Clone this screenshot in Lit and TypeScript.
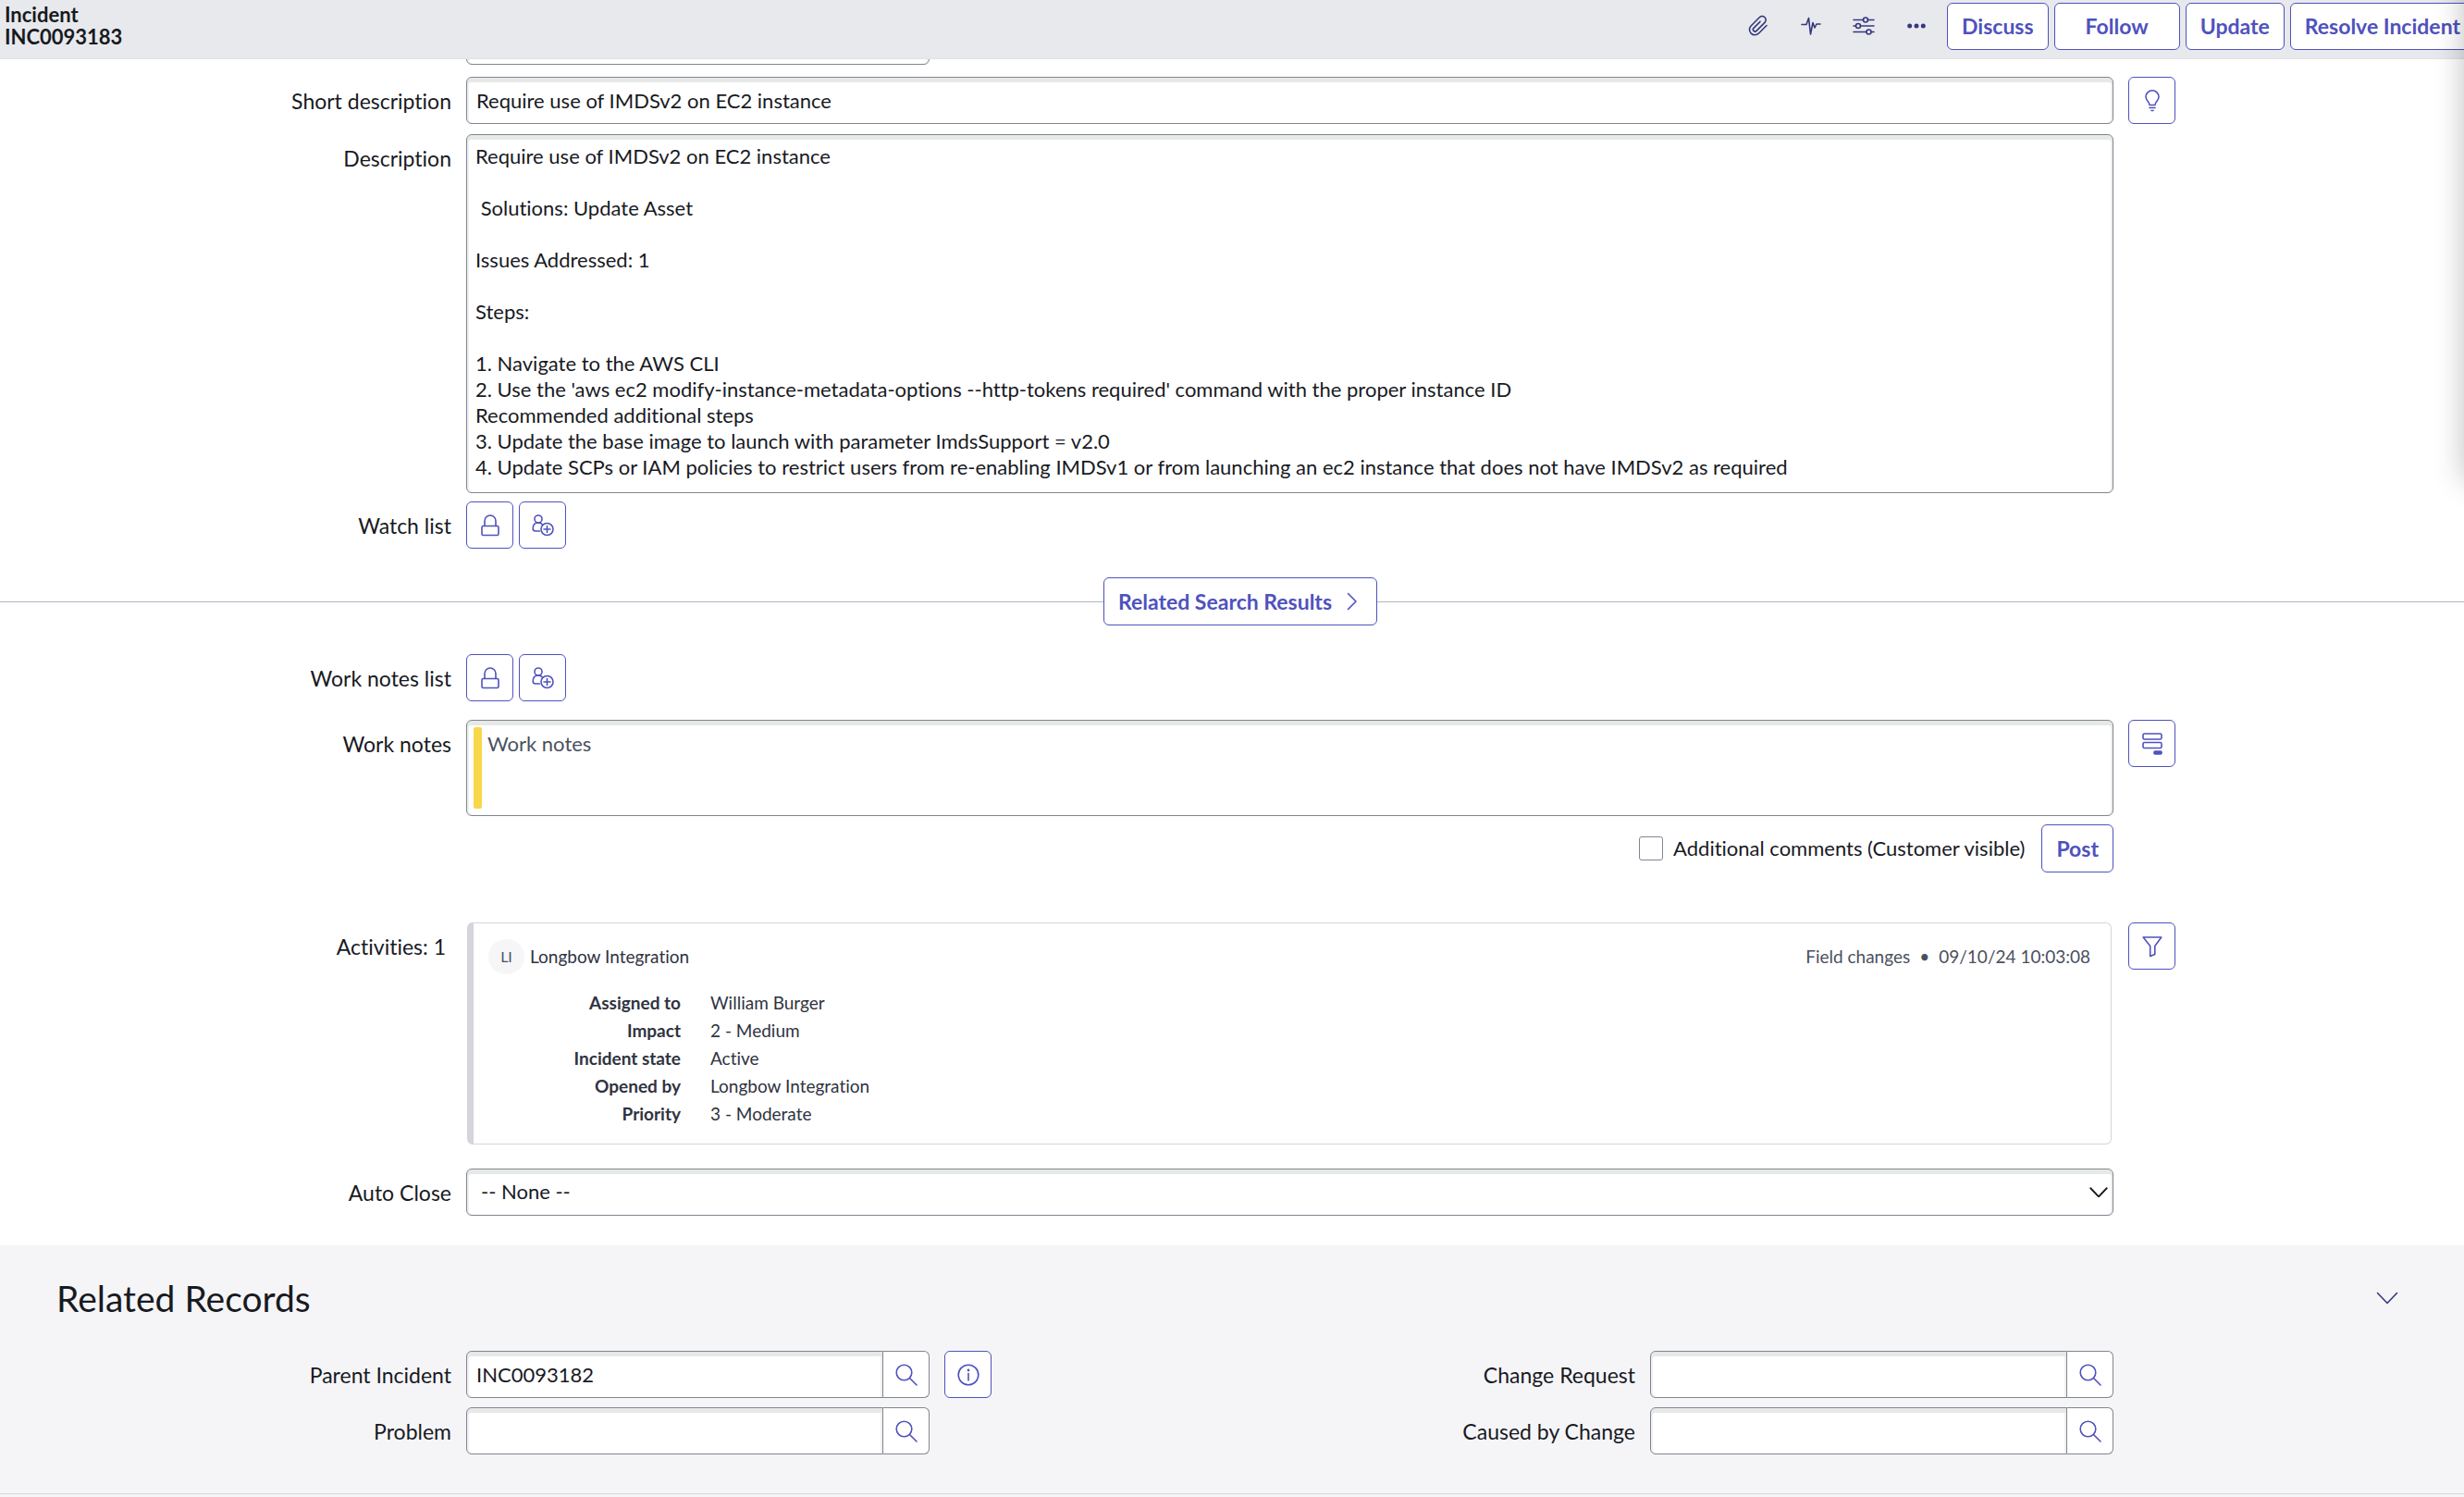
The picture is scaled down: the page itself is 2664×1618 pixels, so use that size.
import { LitElement, html, css, svg } from "lit";
import { customElement, property } from "lit/decorators.js";

const icons: Record<string, { box: string; width: number; body: unknown }> = {
  clip: {
    box: "0 0 24 24",
    width: 24,
    body: svg`<path d="m21 11.500-8.700 8.700a5.800 5.800 0 0 1-8.200-8.200l9.200-9.300a4 4 0 0 1 5.700 5.700l-9 9a2.100 2.100 0 0 1-3-3l7-7"/>`,
  },
  pulse: {
    box: "0 0 22 20",
    width: 22,
    body: svg`<path d="M1 8.500h5l2.500-7 2 17.500L13 6.500l2 5.500 2-4h4"/>`,
  },
  sliders: {
    box: "0 0 24 20",
    width: 24,
    body: svg`<path d="M1 3.500h10.500M16.500 3.500H23M1 10h2.500M8.500 10H23M1 16.500h14M20 16.500h3"/><circle cx="14" cy="3.500" r="2.500"/><circle cx="6" cy="10" r="2.500"/><circle cx="17.500" cy="16.500" r="2.500"/>`,
  },
  dots: {
    box: "0 0 20 6",
    width: 20,
    body: svg`<g fill="currentColor" stroke="none"><circle cx="2.700" cy="3" r="2.500"/><circle cx="10" cy="3" r="2.500"/><circle cx="17.300" cy="3" r="2.500"/></g>`,
  },
  bulb: {
    box: "0 0 18 24",
    width: 18,
    body: svg`<path d="M6 16.500C6 13 2 12 2 7.800a7 7 0 0 1 14 0C16 12 12 13 12 16.500Z"/><path d="M6 19.500h6M8 22.500h2"/>`,
  },
  lock: {
    box: "0 0 20 24",
    width: 20,
    body: svg`<rect x="1" y="12.500" width="18" height="10" rx="1.500"/><path d="M4 12.500V7a6 6 0 0 1 12 0v5.500"/>`,
  },
  people: {
    box: "0 0 24 24",
    width: 24,
    body: svg`<circle cx="7" cy="5" r="4"/><path d="M8.500 18H4a2.800 2.800 0 0 1-2.800-2.800C1.200 11.500 3.200 9 7 9c2 0 3.500.8 4.500 2"/><circle cx="16.500" cy="16" r="6.500"/><path d="M16.500 12.500v7M13 16h7"/>`,
  },
  template: {
    box: "0 0 22 24",
    width: 22,
    body: svg`<rect x="1" y="1" width="20" height="6" rx="1.500"/><rect x="1" y="10.500" width="20" height="6" rx="1.500"/><rect x="13" y="20" width="8" height="3" rx="1" fill="currentColor"/>`,
  },
  filter: {
    box: "0 0 22 24",
    width: 22,
    body: svg`<path d="M1.200 2h19.600L13.800 11.500v9L8.700 22.500v-11Z"/>`,
  },
  search: {
    box: "0 0 24 24",
    width: 24,
    body: svg`<circle cx="9.500" cy="9.500" r="8.300"/><path d="m15.500 15.500 7.500 7.500"/>`,
  },
  info: {
    box: "0 0 24 24",
    width: 24,
    body: svg`<circle cx="12" cy="12" r="10.800"/><path d="M12 10.500V18"/><circle cx="12" cy="7" r=".6"/>`,
  },
  right: { box: "0 0 12 20", width: 12, body: svg`<path d="m1.500 1.500 8.500 8.500-8.500 8.500"/>` },
  down: { box: "0 0 24 14", width: 24, body: svg`<path d="m1.500 1.500 10.500 11 10.500-11"/>` },
};

const icon = (name: string) => {
  const i = icons[name];
  return html`<svg class="icon" width=${i.width} viewBox=${i.box} aria-hidden="true">${i.body}</svg>`;
};

const base = css`
  * {
    box-sizing: border-box;
  }
  .icon {
    display: block;
    fill: none;
    stroke: currentColor;
    stroke-width: 1.6;
    stroke-linecap: round;
    stroke-linejoin: round;
  }
  button {
    display: inline-flex;
    align-items: center;
    justify-content: center;
    flex: none;
    margin: 0;
    color: #4f52bd;
    background: #fff;
    border: 1px solid #4f52bd;
    border-radius: 6px;
    font: 700 23px/28px Lato, sans-serif;
    font-variant-ligatures: none;
    height: 52px;
    padding: 0 15px;
    cursor: pointer;
  }
  button.square {
    width: 51px;
    height: 51px;
    padding: 0;
  }
  input,
  textarea,
  select {
    display: block;
    width: 100%;
    margin: 0;
    padding: 0 10px 1px;
    color: #181a1f;
    background: #fff;
    border: 1px solid #81858f;
    border-radius: 6px;
    box-shadow: inset 0 5px 0 #e7e9e8, inset 2px 0 0 #eff0f1, inset -2px 0 0 #eff0f1;
    font: 400 22px/28px Lato, sans-serif;
    font-variant-ligatures: none;
    outline: none;
  }
  input,
  select {
    height: 51px;
  }
`;

@customElement("lookup-field")
class LookupField extends LitElement {
  @property() label = "";
  @property() value = "";

  static styles = [
    base,
    css`
      :host {
        display: flex;
      }
      .text {
        flex: 1;
        min-width: 0;
        border-radius: 6px 0 0 6px;
      }
      button.find {
        border-color: #81858f;
        border-left: 0;
        border-radius: 0 6px 6px 0;
        width: 50px;
      }
    `,
  ];

  render() {
    return html`
      <input class="text" type="text" aria-label=${this.label} .value=${this.value} />
      <button class="square find" aria-label="Look up ${this.label}">${icon("search")}</button>
    `;
  }
}

const description = `Require use of IMDSv2 on EC2 instance

 Solutions: Update Asset

Issues Addressed: 1

Steps:

1. Navigate to the AWS CLI
2. Use the 'aws ec2 modify-instance-metadata-options --http-tokens required' command with the proper instance ID
Recommended additional steps
3. Update the base image to launch with parameter ImdsSupport = v2.0
4. Update SCPs or IAM policies to restrict users from re-enabling IMDSv1 or from launching an ec2 instance that does not have IMDSv2 as required`;

const changes = [
  ["Assigned to", "William Burger"],
  ["Impact", "2 - Medium"],
  ["Incident state", "Active"],
  ["Opened by", "Longbow Integration"],
  ["Priority", "3 - Moderate"],
];

@customElement("app-root")
class AppRoot extends LitElement {
  static styles = [
    base,
    css`
      :host {
        display: block;
        position: relative;
        min-height: 100vh;
        overflow: hidden;
        background: #f5f5f8;
        color: #181a1f;
        font: 400 22px/28px Lato, sans-serif;
        font-variant-ligatures: none;
      }
      .bar {
        display: flex;
        justify-content: space-between;
        height: 64px;
        padding: 3px 0 0 5px;
        background: #e8e9ed;
        border-bottom: 1px solid #e0e2e6;
        overflow: hidden;
      }
      .title {
        margin: 0;
        padding-top: 1px;
        font-size: 22px;
        line-height: 24px;
        font-weight: 700;
      }
      .title span {
        display: block;
      }
      .actions {
        display: flex;
        align-items: flex-start;
        gap: 6px;
        margin-right: -12px;
      }
      .actions button {
        height: 51px;
        padding-bottom: 2px;
      }
      .tools {
        display: flex;
        gap: 6px;
        margin-right: 2px;
      }
      .actions button.tool {
        width: 51px;
        color: #36387f;
        background: none;
        border-color: transparent;
      }
      .actions button.wide {
        padding: 0 33px 2px;
      }
      .form {
        padding-bottom: 32px;
        background: #fff;
      }
      .previous {
        display: flex;
        align-items: flex-end;
        height: 6px;
        overflow: hidden;
      }
      .row {
        display: grid;
        grid-template-columns: 488fr 1781fr 363fr;
        column-gap: 16px;
        align-items: start;
      }
      .label {
        text-align: right;
        padding-top: 12px;
        font-size: 23px;
      }
      .previous-row {
        display: grid;
        grid-template-columns: 488fr 501fr 1643fr;
        column-gap: 16px;
      }
      .short {
        margin-top: 13px;
      }
      .long {
        margin-top: 11px;
      }
      .description {
        height: 388px;
        padding: 9px;
        resize: none;
        overflow: hidden;
      }
      .list {
        margin-top: 9px;
      }
      .pair {
        display: flex;
        gap: 6px;
      }
      .divider {
        display: flex;
        align-items: center;
        margin: 31px 0;
      }
      .divider::before,
      .divider::after {
        content: "";
        height: 1px;
        background: #b3b4c4;
      }
      .divider::before {
        flex: 1193;
      }
      .divider::after {
        flex: 1175;
      }
      .divider button {
        gap: 16px;
        padding: 0 20px 0 15px;
      }
      .worknotes {
        margin-top: 20px;
      }
      .journal {
        position: relative;
      }
      .journal::before {
        content: "";
        position: absolute;
        left: 8px;
        top: 8px;
        bottom: 8px;
        width: 9px;
        border-radius: 2px;
        background: #f8d749;
      }
      .notes {
        height: 104px;
        padding: 11px 22px;
        resize: none;
      }
      .notes::placeholder {
        color: #4b505e;
        opacity: 1;
      }
      .post {
        display: flex;
        justify-content: flex-end;
        align-items: center;
        margin-top: 9px;
      }
      .post input {
        appearance: none;
        width: 26px;
        height: 26px;
        padding: 0;
        border-radius: 3px;
        box-shadow: none;
      }
      .post label {
        padding: 0 18px 0 11px;
      }
      .activities {
        margin-top: 54px;
      }
      .activities .label {
        padding-right: 6px;
      }
      .card {
        margin: 0 2px 0 1px;
        padding: 17px 22px 17px 16px;
        border: 1px solid #d4d5dc;
        border-left-width: 7px;
        border-radius: 6px;
        color: #2f3341;
        font-size: 19px;
        line-height: 30px;
      }
      .card-head {
        display: flex;
        align-items: center;
      }
      .avatar {
        display: grid;
        place-items: center;
        width: 39px;
        height: 38px;
        margin-right: 6px;
        border-radius: 50%;
        background: #f6f6f8;
        font-size: 16px;
        color: #4b505e;
      }
      .stamp {
        display: flex;
        gap: 10px;
        margin-left: auto;
        color: #4b505e;
      }
      .changes {
        border-collapse: collapse;
        margin-top: 16px;
        width: 100%;
      }
      .changes th {
        width: 208px;
        padding: 0;
        text-align: right;
        font-weight: 700;
      }
      .changes td {
        padding: 0 0 0 32px;
      }
      .auto {
        margin-top: 26px;
      }
      .select {
        display: grid;
        align-items: center;
      }
      .select select,
      .select .icon {
        grid-area: 1 / 1;
      }
      .select select {
        appearance: none;
        padding: 0 15px 1px;
      }
      .select .icon {
        justify-self: end;
        width: 20px;
        margin-right: 6px;
        stroke-width: 2.2;
        pointer-events: none;
      }
      .related {
        padding-bottom: 42px;
        background: #f5f5f8;
        border-bottom: 1px solid #d4d5dc;
      }
      .related-head {
        display: flex;
        align-items: center;
        justify-content: space-between;
        padding: 31px 58px 31px 61px;
        color: #181a1f;
      }
      .related-head h2 {
        margin: 0;
        font-size: 39px;
        line-height: 52px;
        font-weight: 400;
      }
      .related-head button {
        width: 51px;
        padding: 0;
        border: 0;
        background: none;
        color: #36387f;
      }
      .records {
        display: grid;
        grid-template-columns: 488fr 501fr 51px 680fr 501fr 363fr;
        gap: 10px 16px;
      }
      .edge {
        position: absolute;
        top: -30px;
        right: -40px;
        width: 40px;
        height: 550px;
        box-shadow: 0 0 32px rgba(0, 0, 0, 0.25);
      }
    `,
  ];

  render() {
    return html`
      <header class="bar">
        <h1 class="title"><span>Incident</span><span>INC0093183</span></h1>
        <div class="actions">
          <div class="tools">
            <button class="square tool" aria-label="Attachments">${icon("clip")}</button>
            <button class="square tool" aria-label="Activity">${icon("pulse")}</button>
            <button class="square tool" aria-label="Personalize">${icon("sliders")}</button>
            <button class="square tool" aria-label="More options">${icon("dots")}</button>
          </div>
          <button>Discuss</button>
          <button class="wide">Follow</button>
          <button>Update</button>
          <button>Resolve Incident</button>
        </div>
      </header>
      <main>
        <div class="form">
          <div class="previous-row">
            <span></span>
            <div class="previous"><input type="text" aria-label="Assigned to" /></div>
          </div>
          <div class="row short">
            <label class="label" for="short">Short description</label>
            <input id="short" type="text" .value=${"Require use of IMDSv2 on EC2 instance"} />
            <div><button class="square" aria-label="Suggestion">${icon("bulb")}</button></div>
          </div>
          <div class="row long">
            <label class="label" for="description">Description</label>
            <textarea id="description" class="description" .value=${description}></textarea>
          </div>
          <div class="row list">
            <span class="label">Watch list</span>
            <div class="pair">
              <button class="square" aria-label="Unlock watch list">${icon("lock")}</button>
              <button class="square" aria-label="Add me to watch list">${icon("people")}</button>
            </div>
          </div>
          <div class="divider"><button>Related Search Results ${icon("right")}</button></div>
          <div class="row">
            <span class="label">Work notes list</span>
            <div class="pair">
              <button class="square" aria-label="Unlock work notes list">${icon("lock")}</button>
              <button class="square" aria-label="Add me to work notes list">${icon("people")}</button>
            </div>
          </div>
          <div class="row worknotes">
            <label class="label" for="notes">Work notes</label>
            <div>
              <div class="journal">
                <textarea id="notes" class="notes" placeholder="Work notes"></textarea>
              </div>
              <div class="post">
                <input id="visible" type="checkbox" />
                <label for="visible">Additional comments (Customer visible)</label>
                <button>Post</button>
              </div>
            </div>
            <div><button class="square" aria-label="Templates">${icon("template")}</button></div>
          </div>
          <div class="row activities">
            <span class="label">Activities: 1</span>
            <article class="card">
              <div class="card-head">
                <span class="avatar">LI</span>
                <span>Longbow Integration</span>
                <span class="stamp"><span>Field changes</span><span>•</span><span>09/10/24 10:03:08</span></span>
              </div>
              <table class="changes">
                ${changes.map(([k, v]) => html`<tr><th scope="row">${k}</th><td>${v}</td></tr>`)}
              </table>
            </article>
            <div><button class="square" aria-label="Filter activity">${icon("filter")}</button></div>
          </div>
          <div class="row auto">
            <label class="label" for="auto">Auto Close</label>
            <div class="select">
              <select id="auto"><option>-- None --</option></select>
              ${icon("down")}
            </div>
          </div>
        </div>
        <section class="related">
          <div class="related-head">
            <h2>Related Records</h2>
            <button aria-label="Collapse section">${icon("down")}</button>
          </div>
          <div class="records">
            <span class="label">Parent Incident</span>
            <lookup-field label="Parent Incident" value="INC0093182"></lookup-field>
            <button class="square" aria-label="Preview record">${icon("info")}</button>
            <span class="label">Change Request</span>
            <lookup-field label="Change Request"></lookup-field>
            <span></span>
            <span class="label">Problem</span>
            <lookup-field label="Problem"></lookup-field>
            <span></span>
            <span class="label">Caused by Change</span>
            <lookup-field label="Caused by Change"></lookup-field>
          </div>
        </section>
      </main>
      <div class="edge"></div>
    `;
  }
}
